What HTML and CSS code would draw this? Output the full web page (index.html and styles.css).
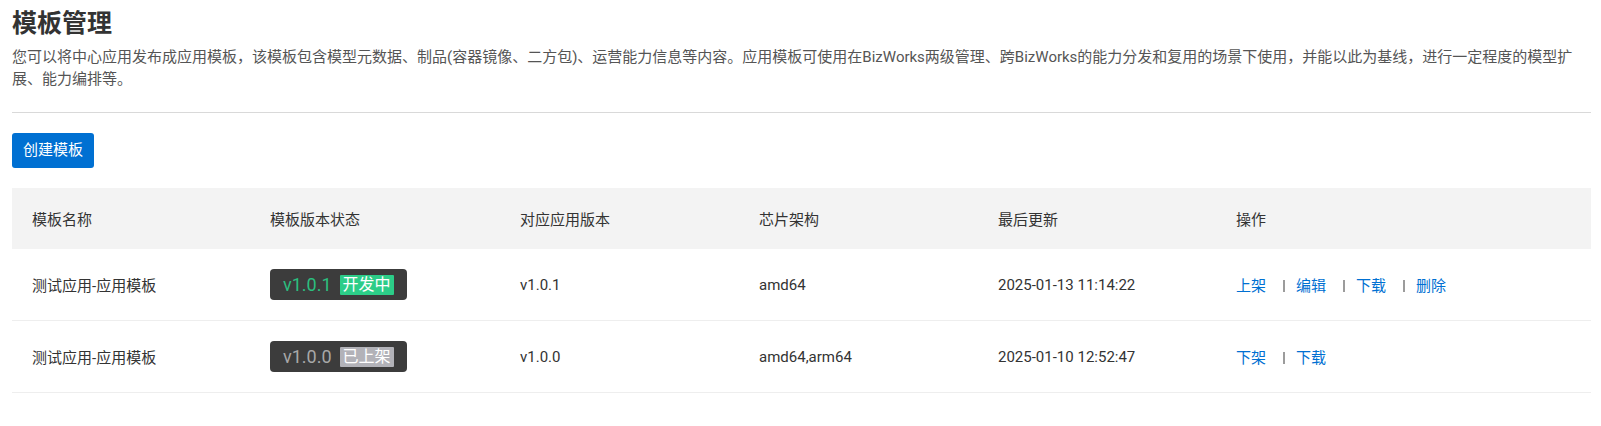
FILE: index.html
```html
<!DOCTYPE html>
<html lang="zh-CN">
<head>
<meta charset="utf-8">
<title>模板管理</title>
<link rel="stylesheet" href="styles.css">
</head>
<body>
<div class="page">
  <h1 class="title">模板管理</h1>
  <p class="desc">您可以将中心应用发布成应用模板，该模板包含模型元数据、制品(容器镜像、二方包)、运营能力信息等内容。应用模板可使用在BizWorks两级管理、跨BizWorks的能力分发和复用的场景下使用，并能以此为基线，进行一定程度的模型扩展、能力编排等。</p>
  <div class="divider"></div>
  <button class="btn-primary">创建模板</button>
  <table class="tpl-table">
    <colgroup>
      <col class="c1"><col class="c2"><col class="c3"><col class="c4"><col class="c5"><col class="c6">
    </colgroup>
    <thead>
      <tr>
        <th>模板名称</th>
        <th>模板版本状态</th>
        <th>对应应用版本</th>
        <th>芯片架构</th>
        <th>最后更新</th>
        <th>操作</th>
      </tr>
    </thead>
    <tbody>
      <tr>
        <td>测试应用-应用模板</td>
        <td><span class="ver ver-dev"><span class="ver-num">v1.0.1</span><span class="ver-tag">开发中</span></span></td>
        <td>v1.0.1</td>
        <td>amd64</td>
        <td>2025-01-13 11:14:22</td>
        <td class="actions"><a href="#">上架</a><span class="sep"></span><a href="#">编辑</a><span class="sep"></span><a href="#">下载</a><span class="sep"></span><a href="#">删除</a></td>
      </tr>
      <tr>
        <td>测试应用-应用模板</td>
        <td><span class="ver ver-pub"><span class="ver-num">v1.0.0</span><span class="ver-tag">已上架</span></span></td>
        <td>v1.0.0</td>
        <td>amd64,arm64</td>
        <td>2025-01-10 12:52:47</td>
        <td class="actions"><a href="#">下架</a><span class="sep"></span><a href="#">下载</a></td>
      </tr>
    </tbody>
  </table>
</div>
</body>
</html>
```

FILE: styles.css
```css
html, body {
  margin: 0;
  padding: 0;
  background: #ffffff;
}

body {
  font-family: Roboto, "Noto Sans CJK SC", sans-serif;
  color: #333333;
  font-size: 15px;
}

.page {
  padding: 8px 10px 0 12px;
}

.title {
  margin: 0;
  font-size: 25px;
  line-height: 32px;
  font-weight: 700;
  color: #333333;
}

.desc {
  margin: 6px 0 0 0;
  max-width: 1566px;
  font-size: 15px;
  line-height: 22px;
  color: #555555;
}

.divider {
  margin-top: 22px;
  height: 1px;
  background: #d9d9d9;
}

.btn-primary {
  display: block;
  margin-top: 20px;
  height: 35px;
  padding: 0 11px;
  border: none;
  border-radius: 3px;
  background: #0070d2;
  color: #ffffff;
  font-family: Roboto, "Noto Sans CJK SC", sans-serif;
  font-size: 15px;
  line-height: 35px;
  cursor: pointer;
}

.tpl-table {
  margin-top: 20px;
  width: 100%;
  border-collapse: collapse;
  table-layout: fixed;
}

.c1 { width: 238px; }
.c2 { width: 250px; }
.c3 { width: 239px; }
.c4 { width: 239px; }
.c5 { width: 238px; }

.tpl-table th {
  height: 61px;
  padding: 0 0 0 20px;
  background: #f3f3f3;
  text-align: left;
  font-weight: 400;
  color: #333333;
  font-size: 15px;
}

.tpl-table td {
  height: 71px;
  padding: 0 0 0 20px;
  border-bottom: 1px solid #eeeeee;
  color: #333333;
  font-size: 15px;
  white-space: nowrap;
}

.ver {
  display: inline-flex;
  align-items: center;
  height: 31px;
  padding: 0 13px;
  border-radius: 4px;
  background: #3c3c3c;
  vertical-align: middle;
}

.ver-num {
  font-size: 18px;
  line-height: 31px;
}

.ver-tag {
  margin-left: 8px;
  padding: 0 3px;
  height: 20px;
  line-height: 20px;
  font-size: 16px;
  color: #ffffff;
  border-radius: 1px;
}

.ver-dev .ver-num { color: #2bbf7f; }
.ver-dev .ver-tag { background: #2ccd88; }
.ver-pub .ver-num { color: #a8a8a8; }
.ver-pub .ver-tag { background: #b2b2b8; }

.actions a {
  color: #0070d2;
  text-decoration: none;
}

.actions .sep {
  display: inline-block;
  width: 2px;
  height: 12px;
  margin: 0 11px 0 17px;
  background: #9c9c9c;
  vertical-align: -1px;
}
```
